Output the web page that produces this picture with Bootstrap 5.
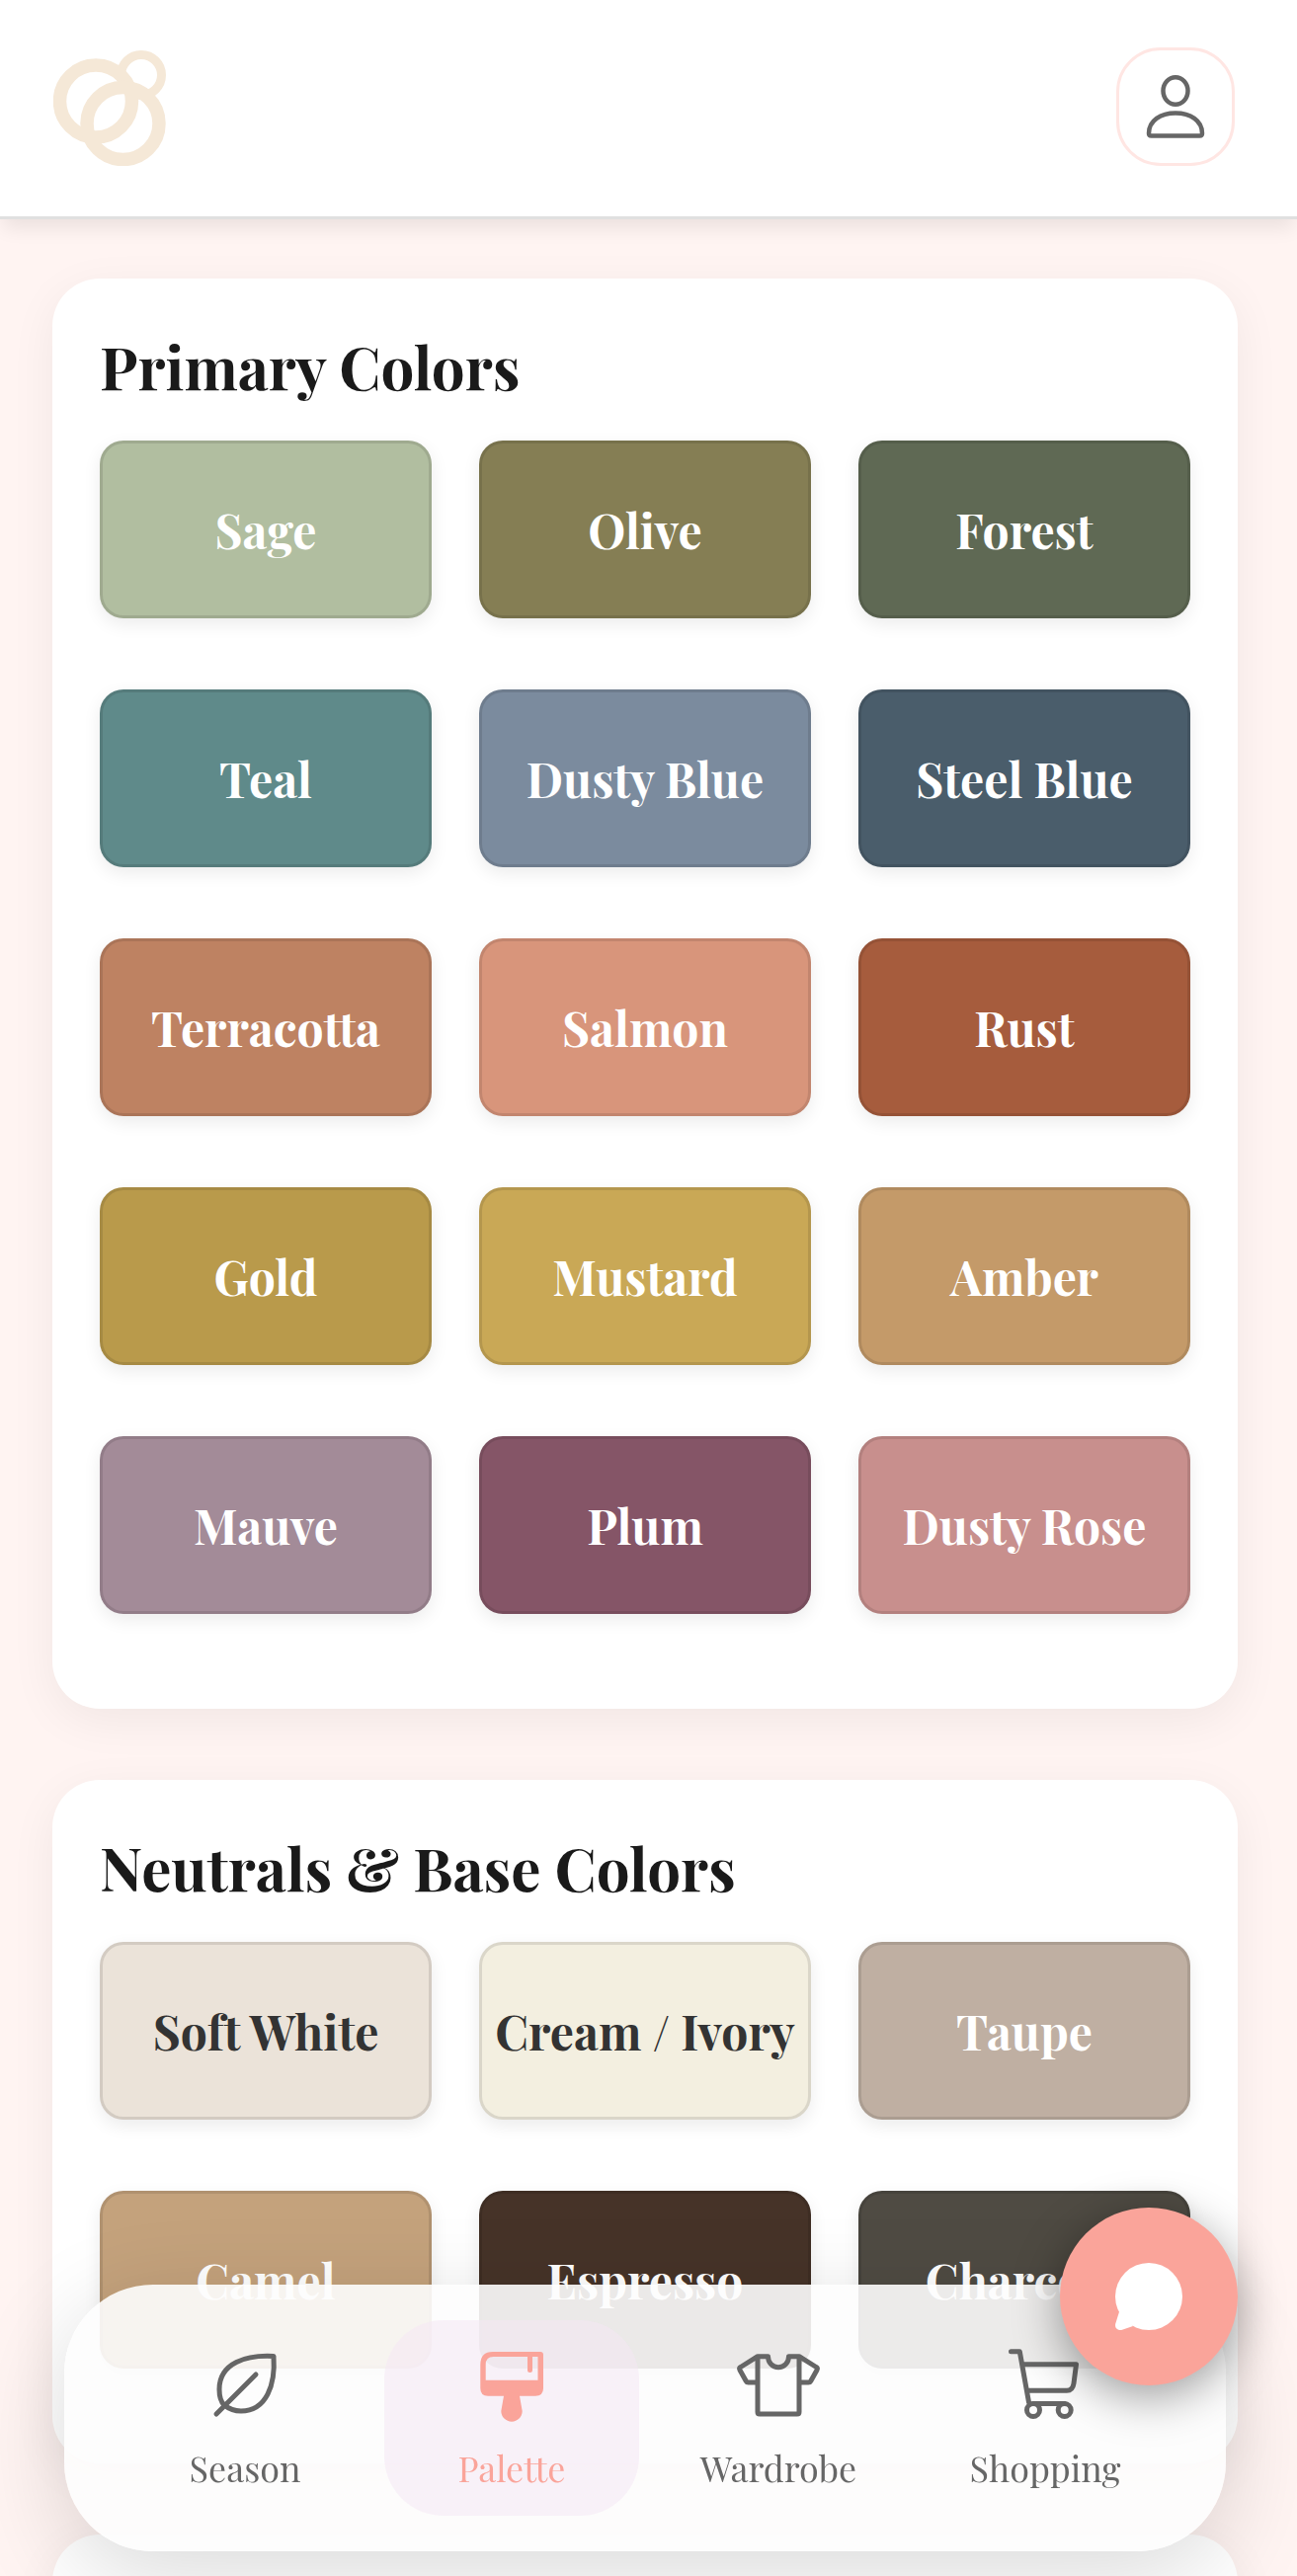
<!DOCTYPE html>
<html lang="en">
<head>
<meta charset="utf-8">
<meta name="viewport" content="width=device-width, initial-scale=1">
<title>Color Palette</title>
<link rel="stylesheet" href="https://cdn.jsdelivr.net/npm/bootstrap@5.3.0/dist/css/bootstrap.min.css">
<style>
  body { background: #fff4f2; font-family: "Playfair Display", "Liberation Serif", serif; color: #1a1a1a; }
  .top-bar { padding: 48px 63px 51px 54px; border-bottom: 3px solid #e0e0e0; background: #fff; box-shadow: 0 12px 18px -3px rgba(0,0,0,.08); z-index: 2; }
  .profile-btn { width: 120px; height: 120px; border: 3px solid #ffe6e3; border-radius: 45px; background: #fff; }
  .scroll-area { padding: 60px 60px 0 53px; gap: 72px; overflow-y: auto; scrollbar-width: none; min-height: 0; }
  .scroll-area::-webkit-scrollbar { display: none; }
  .palette-card { --bs-card-border-width: 0; --bs-card-border-radius: 48px; --bs-card-bg: #fff; padding: 48px 48px 96px; box-shadow: 0 12px 48px rgba(0,0,0,.06); }
  .palette-title { font-size: 60px; line-height: 80px; font-weight: 700; margin-bottom: 36px; color: #1a1a1a; }
  .swatch-grid { --bs-gutter-x: 48px; --bs-gutter-y: 72px; }
  .swatch { height: 180px; border: 3px solid rgba(0,0,0,.1); border-radius: 24px; box-shadow: 0 6px 18px rgba(0,0,0,.08); color: #fff; font-size: 48px; line-height: 60px; font-weight: 700; white-space: nowrap; }
  .on-light { color: #333; }
  .tab-bar { margin: 0 72px 25px 65px; padding: 36px 54px; gap: 12px; border-radius: 90px; background: rgba(253,253,253,.9); box-shadow: 0 24px 96px rgba(0,0,0,.15); }
  .tab-item { flex: 1 1 0; padding: 18px 0 26px; gap: 12px; border-radius: 60px; color: #666; font-size: 36px; line-height: 46px; text-decoration: none; }
  .tab-item.active { color: #faa49a; background: rgba(244,231,244,.55); }
  .line-icon { fill: none; stroke: currentColor; stroke-width: 5; stroke-linecap: round; stroke-linejoin: round; }
  .chat-btn { right: 60px; bottom: 193px; width: 180px; height: 180px; background: #faa49a; box-shadow: 0 12px 48px rgba(0,0,0,.38); z-index: 1040; }
</style>
<script src="https://cdn.jsdelivr.net/npm/bootstrap@5.3.0/dist/js/bootstrap.bundle.min.js"></script>
</head>
<body class="d-flex flex-column vh-100 overflow-hidden">

<header class="top-bar d-flex justify-content-between align-items-center position-relative">
  <a href="#" aria-label="Home">
    <svg class="d-block" width="114" height="120" viewBox="0 0 114 120" fill="none" stroke="#f5e8d7">
      <circle cx="89" cy="28" r="20.5" stroke-width="9"/>
      <circle cx="43" cy="54.500" r="36.500" stroke-width="13.500"/>
      <circle cx="70.500" cy="77" r="36.500" stroke-width="13.500"/>
    </svg>
  </a>
  <button class="profile-btn p-0 d-flex align-items-center justify-content-center" type="button" aria-label="Profile">
    <svg width="72" height="72" viewBox="24 24 72 72" fill="none" stroke="#666" stroke-width="4.500" stroke-linejoin="round">
      <ellipse cx="60" cy="44" rx="12.500" ry="13.700"/>
      <path d="M33 87C33 74 45 66.500 60 66.500S87 74 87 87Q87 89.500 84.500 89.500H35.500Q33 89.500 33 87Z"/>
    </svg>
  </button>
</header>

<main class="scroll-area d-flex flex-column flex-grow-1">
  <section class="card palette-card flex-shrink-0">
    <h2 class="palette-title">Primary Colors</h2>
    <div class="row swatch-grid">
      <div class="col-4"><div class="swatch d-flex align-items-center justify-content-center" style="background-color:#b1bea0">Sage</div></div>
      <div class="col-4"><div class="swatch d-flex align-items-center justify-content-center" style="background-color:#857e54">Olive</div></div>
      <div class="col-4"><div class="swatch d-flex align-items-center justify-content-center" style="background-color:#5f6954">Forest</div></div>
      <div class="col-4"><div class="swatch d-flex align-items-center justify-content-center" style="background-color:#5f8a8a">Teal</div></div>
      <div class="col-4"><div class="swatch d-flex align-items-center justify-content-center" style="background-color:#7b8b9e">Dusty Blue</div></div>
      <div class="col-4"><div class="swatch d-flex align-items-center justify-content-center" style="background-color:#4a5d6b">Steel Blue</div></div>
      <div class="col-4"><div class="swatch d-flex align-items-center justify-content-center" style="background-color:#be8262">Terracotta</div></div>
      <div class="col-4"><div class="swatch d-flex align-items-center justify-content-center" style="background-color:#d8957b">Salmon</div></div>
      <div class="col-4"><div class="swatch d-flex align-items-center justify-content-center" style="background-color:#a65c3d">Rust</div></div>
      <div class="col-4"><div class="swatch d-flex align-items-center justify-content-center" style="background-color:#b99a4b">Gold</div></div>
      <div class="col-4"><div class="swatch d-flex align-items-center justify-content-center" style="background-color:#c9a856">Mustard</div></div>
      <div class="col-4"><div class="swatch d-flex align-items-center justify-content-center" style="background-color:#c49a69">Amber</div></div>
      <div class="col-4"><div class="swatch d-flex align-items-center justify-content-center" style="background-color:#a38b98">Mauve</div></div>
      <div class="col-4"><div class="swatch d-flex align-items-center justify-content-center" style="background-color:#855567">Plum</div></div>
      <div class="col-4"><div class="swatch d-flex align-items-center justify-content-center" style="background-color:#c88f8d">Dusty Rose</div></div>
    </div>
  </section>

  <section class="card palette-card flex-shrink-0">
    <h2 class="palette-title">Neutrals &amp; Base Colors</h2>
    <div class="row swatch-grid">
      <div class="col-4"><div class="swatch on-light d-flex align-items-center justify-content-center" style="background-color:#ebe3d9">Soft White</div></div>
      <div class="col-4"><div class="swatch on-light d-flex align-items-center justify-content-center" style="background-color:#f3efe0">Cream / Ivory</div></div>
      <div class="col-4"><div class="swatch d-flex align-items-center justify-content-center" style="background-color:#bfafa2">Taupe</div></div>
      <div class="col-4"><div class="swatch d-flex align-items-center justify-content-center" style="background-color:#c4a27c">Camel</div></div>
      <div class="col-4"><div class="swatch d-flex align-items-center justify-content-center" style="background-color:#463328">Espresso</div></div>
      <div class="col-4"><div class="swatch d-flex align-items-center justify-content-center" style="background-color:#4f4b43">Charcoal</div></div>
    </div>
  </section>

  <section class="card palette-card flex-shrink-0"></section>
</main>

<nav class="tab-bar fixed-bottom d-flex" aria-label="Main">
  <a class="tab-item d-flex flex-column align-items-center" href="#">
    <svg class="line-icon" width="96" height="96" viewBox="0 0 96 96"><path d="M77 18.500C50 17 22 25 22 52C22 59 24 65 27 68C32 72 38 74 44 74C70 74 79 47 77 18.500ZM19 77L59 37"/></svg>
    Season
  </a>
  <a class="tab-item active d-flex flex-column align-items-center" href="#" aria-current="page">
    <svg width="96" height="96" viewBox="0 0 96 96" fill="currentColor"><path fill-rule="evenodd" d="M29 14H77Q80 14 80 17V51Q80 58.700 72 58.700H56L58.700 74A10.700 10.700 0 1 1 37.300 74L40 58.700H24Q16.300 58.700 16.300 51V27Q16.300 14 29 14ZM29.500 19Q21.700 19 21.700 27V42.700H74.500V19H69V32.500A2.500 2.500 0 0 1 64 32.500V19Z"/></svg>
    Palette
  </a>
  <a class="tab-item d-flex flex-column align-items-center" href="#">
    <svg class="line-icon" width="96" height="96" viewBox="0 0 96 96"><path d="M27 45H17.500Q16 45 15.300 43.700L9 32.500Q8 30.500 9.700 29.500L27 18.700H37.500C37.500 25 42 29.700 48 29.700S58.500 25 58.500 18.700H69L86.300 29.500Q88 30.500 87 32.500L80.700 43.700Q80 45 78.500 45H69M27 18.700V75Q27 77 29 77H67Q69 77 69 75V18.700"/></svg>
    Wardrobe
  </a>
  <a class="tab-item d-flex flex-column align-items-center" href="#">
    <svg class="line-icon" width="96" height="96" viewBox="0 0 96 96"><path d="M13.500 13.700H22.300L31.500 65L33 67M26 26.700H79.500L77 46Q76 53.300 70 53.300H31M36 66.500H67.700"/><circle cx="36" cy="73" r="6.500"/><circle cx="67.700" cy="73" r="6.500"/></svg>
    Shopping
  </a>
</nav>

<button class="chat-btn position-fixed border-0 rounded-circle p-0 d-flex align-items-center justify-content-center" type="button" aria-label="Open chat">
  <svg width="72" height="72" viewBox="0 0 72 72" fill="#fff"><circle cx="36" cy="36" r="34"/><path d="M6.500 50L2.300 63.500C1 68 5 71 9 69.800L20 66Z"/></svg>
</button>
</body>
</html>
